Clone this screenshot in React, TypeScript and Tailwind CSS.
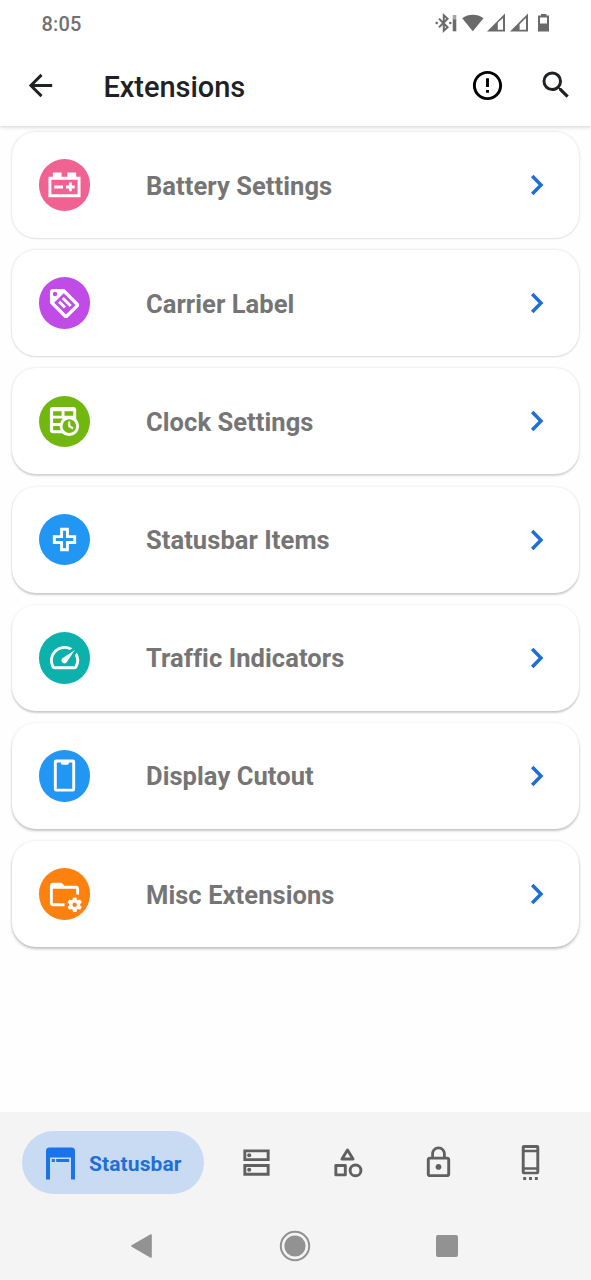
import React from "react";
import { MdArrowBack, MdSearch, MdErrorOutline, MdSpeed, MdLockOutline } from "react-icons/md";

const glyph = "h-[35px] w-[35px] shrink-0";

const Svg = ({ children, className = glyph }: { children: React.ReactNode; className?: string }) => (
  <svg viewBox="0 0 24 24" className={className} fill="currentColor" fillRule="evenodd">
    {children}
  </svg>
);

const CarBattery = () => (
  <Svg>
    <path d="M4,3V6H1V20H23V6H20V3H14V6H10V3H4M3,8H21V18H3V8M15,10V12H13V14H15V16H17V14H19V12H17V10H15M5,12V14H11V12H5Z" />
  </Svg>
);

const TagText = () => (
  <Svg>
    <path d="M21.41,11.58L12.41,2.58C12.05,2.22 11.55,2 11,2H4C2.89,2 2,2.89 2,4V11C2,11.55 2.22,12.05 2.59,12.41L11.58,21.41C11.95,21.78 12.45,22 13,22C13.55,22 14.05,21.77 14.41,21.41L21.41,14.41C21.77,14.05 22,13.55 22,13C22,12.45 21.77,11.94 21.41,11.58M5.5,4A1.5,1.5 0 0,1 7,5.5A1.5,1.5 0 0,1 5.5,7A1.5,1.5 0 0,1 4,5.5A1.5,1.5 0 0,1 5.5,4M11.5,4.9L19.6,13L13,19.6L4.9,11.5Z" />
    <path d="M10.1,8.9L11.5,7.5L17,13L15.6,14.4ZM7.6,11.4L9,10L13,14L11.6,15.4Z" />
  </Svg>
);

const TableClock = () => (
  <Svg>
    <path d="M4,2H18A2,2 0 0 1 20,4V10.3A6.5,6.5 0 1 1 10.3,20H4A2,2 0 0 1 2,18V4A2,2 0 0 1 4,2M4.2,5V8H10V5H4.2M12,5V8H18V5H12M4.2,10V13H9.2A6.5,6.5 0 0 1 10.8,10H4.2M4.2,15V18H9.3A6.5,6.5 0 0 1 8.7,15H4.2M15.3,10.5A4.7,4.7 0 1 0 15.3,19.9A4.7,4.7 0 1 0 15.3,10.5M14.5,12H16V14.8L18.2,16.1L17.5,17.4L14.5,15.6V12" />
  </Svg>
);

const PlusOutline = () => (
  <Svg>
    <path d="M4,9H9V4H15V9H20V15H15V20H9V15H4V9M11,13V18H13V13H18V11H13V6H11V11H6V13H11Z" />
  </Svg>
);

const Cutout = () => (
  <Svg>
    <path d="M6.3,1H17.7A1.6,1.6 0 0 1 19.3,2.6V21.4A1.6,1.6 0 0 1 17.7,23H6.3A1.6,1.6 0 0 1 4.7,21.4V2.6A1.6,1.6 0 0 1 6.3,1M6.7,3V21H17.3V3H15V3.6A1,1 0 0 1 14,4.6H10.6A1,1 0 0 1 9.6,3.6V3H6.7" />
  </Svg>
);

const FolderCog = () => (
  <Svg>
    <path d="M4 4C2.89 4 2 4.89 2 6V18C2 19.11 2.9 20 4 20H12V18H4V8H20V12H22V8C22 6.89 21.1 6 20 6H12L10 4M18 14C17.87 14 17.76 14.09 17.74 14.21L17.55 15.53C17.25 15.66 16.96 15.82 16.7 16L15.46 15.5C15.35 15.5 15.22 15.5 15.15 15.63L14.15 17.36C14.09 17.47 14.11 17.6 14.21 17.68L15.27 18.5C15.25 18.67 15.24 18.83 15.24 19C15.24 19.17 15.25 19.33 15.27 19.5L14.21 20.32C14.12 20.4 14.09 20.53 14.15 20.64L15.15 22.37C15.21 22.5 15.34 22.5 15.46 22.5L16.7 22C16.96 22.18 17.24 22.35 17.55 22.47L17.74 23.79C17.76 23.91 17.86 24 18 24H20C20.11 24 20.22 23.91 20.24 23.79L20.43 22.47C20.73 22.34 21 22.18 21.27 22L22.5 22.5C22.63 22.5 22.76 22.5 22.83 22.37L23.83 20.64C23.89 20.53 23.86 20.4 23.77 20.32L22.7 19.5C22.72 19.33 22.74 19.17 22.74 19C22.74 18.83 22.73 18.67 22.7 18.5L23.76 17.68C23.85 17.6 23.88 17.47 23.82 17.36L22.82 15.63C22.76 15.5 22.63 15.5 22.5 15.5L21.27 16C21 15.82 20.73 15.65 20.42 15.53L20.23 14.21C20.22 14.09 20.11 14 20 14M19 17.5C19.83 17.5 20.5 18.17 20.5 19C20.5 19.83 19.83 20.5 19 20.5C18.16 20.5 17.5 19.83 17.5 19C17.5 18.17 18.17 17.5 19 17.5Z" />
  </Svg>
);

const rows = [
  { label: "Battery Settings", color: "bg-[#f06292]", icon: <CarBattery />, shadow: "shadow-[0_0_2px_1px_rgba(0,0,0,0.08),0_1px_1px_rgba(0,0,0,0.05)]" },
  { label: "Carrier Label", color: "bg-[#c04be6]", icon: <TagText />, shadow: "shadow-[0_0_2px_1px_rgba(0,0,0,0.07),0_1px_2px_rgba(0,0,0,0.09)]" },
  { label: "Clock Settings", color: "bg-[#72b70f]", icon: <TableClock />, shadow: "shadow-[0_0_3px_rgba(0,0,0,0.10),0_1.5px_2px_rgba(0,0,0,0.15)]" },
  { label: "Statusbar Items", color: "bg-[#2196f3]", icon: <PlusOutline />, shadow: "shadow-[0_0_3px_rgba(0,0,0,0.09),0_1.5px_2px_rgba(0,0,0,0.18)]" },
  { label: "Traffic Indicators", color: "bg-[#0cb1ac]", icon: <MdSpeed className={glyph} />, shadow: "shadow-[0_0_3px_rgba(0,0,0,0.08),0_2px_2px_rgba(0,0,0,0.19)]" },
  { label: "Display Cutout", color: "bg-[#2196f3]", icon: <Cutout />, shadow: "shadow-[0_0_3px_rgba(0,0,0,0.08),0_2px_2.5px_rgba(0,0,0,0.21)]" },
  { label: "Misc Extensions", color: "bg-[#fc810f]", icon: <FolderCog />, shadow: "shadow-[0_0_3px_rgba(0,0,0,0.09),0_2px_3px_rgba(0,0,0,0.23)]" },
];

const StatusIcons = () => (
  <svg viewBox="0 0 118 24" className="h-6 w-[118px] shrink-0" fill="#6a6a6a">
    <path d="M4 6.6L12.6 15.2L8.8 18.8V3.2L12.6 6.8L4 15.4" fill="none" stroke="#6a6a6a" strokeWidth="2" />
    <circle cx="1.7" cy="11" r="1.3" />
    <circle cx="15.3" cy="11" r="1.3" />
    <rect x="17.7" y="3" width="3.6" height="4.5" fill="#a5a5a5" />
    <rect x="17.7" y="7.3" width="3.6" height="12" />
    <path d="M27.2 6.2C33.2 1.6 42.5 1.6 48.5 6.2L37.8 19.3Z" />
    <path d="M52 19.5L70 1.5V19.5Z M62.8 10.8V17.8H68V6Z" fillRule="evenodd" />
    <path d="M75 19.5L93 1.5V19.5Z M84.6 12.3V17.8H91V6Z" fillRule="evenodd" />
    <path d="M106 2H111.5V3.5H114V19.5H103V3.5H106ZM105 5.6V11.5H112V5.6Z" fillRule="evenodd" />
  </svg>
);

const Chevron = () => (
  <svg viewBox="0 0 15 22" className="h-[22px] w-[15px] shrink-0" fill="none" stroke="#1f6fd6" strokeWidth="3.5">
    <path d="M2.2 2L11 11L2.2 20" />
  </svg>
);

const NavCell = ({ children }: { children: React.ReactNode }) => (
  <button className="flex h-16 w-[91.3px] shrink-0 items-center justify-center text-[#606060]">{children}</button>
);

export default function App() {
  return (
    <div className="flex h-[1280px] w-[591px] flex-col overflow-hidden bg-[#fefefe] font-['Roboto',sans-serif]">
      <header className="h-[126px] shrink-0 bg-white shadow-[0_1px_4px_rgba(0,0,0,0.18)]">
        <div className="flex h-[47px] items-center justify-between pl-[41.5px] pr-[38px]">
          <span className="mt-px text-[20px] font-medium leading-6 tracking-[0.2px] text-[#717171]">8:05</span>
          <StatusIcons />
        </div>
        <div className="flex h-[77px] items-center">
          <MdArrowBack className="ml-[23px] h-[35px] w-[35px] shrink-0 text-[#202124]" />
          <h1 className="ml-[45.5px] mt-[3px] flex-1 text-[29px] font-medium leading-9 tracking-[-0.05px] text-[#202124]">Extensions</h1>
          <MdErrorOutline className="mb-px mr-[33px] h-[35px] w-[35px] shrink-0 text-black" />
          <MdSearch className="mb-px mr-[17.5px] h-[36px] w-[36px] shrink-0 text-[#202124]" />
        </div>
      </header>

      <main className="flex flex-1 flex-col gap-[12.2px] px-3 pt-[6px]">
        {rows.map((r) => (
          <div key={r.label} className={`flex h-[106px] shrink-0 items-center rounded-[24px] bg-white pl-[26.7px] pr-[34px] ${r.shadow}`}>
            <span className={`flex h-[51.5px] w-[51.5px] shrink-0 items-center justify-center rounded-full text-white ${r.color}`}>
              {r.icon}
            </span>
            <span className="ml-[55.8px] mt-px flex-1 text-[25.5px] font-bold leading-8 tracking-[0.07px] text-[#757575]">{r.label}</span>
            <Chevron />
          </div>
        ))}
      </main>

      <footer className="flex h-[168px] shrink-0 flex-col bg-[#f4f4f4] pt-[18px]">
        <nav className="flex items-center pl-[22px]">
          <button className="mr-[7px] flex h-[63px] w-[181.5px] shrink-0 items-center rounded-full bg-[#c9dbf3] pl-6 text-[#1a73e8]">
            <svg viewBox="0 0 29 33" className="mt-[3px] h-[33px] w-[29px] shrink-0" fill="currentColor">
              <path d="M0 32.5V4A3.5 3.5 0 0 1 3.5 0.5H25.5A3.5 3.5 0 0 1 29 4V32.5H25V10.5H4V32.5Z" />
              <rect x="5.8" y="12" width="3" height="3" />
              <rect x="10.2" y="12" width="13" height="3" />
            </svg>
            <span className="ml-[14px] mt-[3px] text-[21px] font-bold leading-6 tracking-[0.1px] text-[#1f6fd6]">Statusbar</span>
          </button>
          <NavCell>
            <Svg>
              <path d="M3,3H21V11H3ZM5,5V9H19V5ZM3,13H21V21H3ZM5,15V19H19V15Z" />
              <circle cx="7" cy="7" r="1.4" />
              <circle cx="7" cy="17" r="1.4" />
            </Svg>
          </NavCell>
          <NavCell>
            <svg viewBox="0 0 24 24" className={`${glyph} mt-px`} fill="none" stroke="currentColor" strokeWidth="2" strokeLinejoin="round">
              <path d="M12 3.4L8.2 9.6H15.8Z" />
              <rect x="4" y="14" width="6.5" height="6.5" />
              <circle cx="17.5" cy="17.4" r="3.7" />
            </svg>
          </NavCell>
          <NavCell>
            <MdLockOutline className={glyph} />
          </NavCell>
          <NavCell>
            <Svg>
              <path d="M7.5,0H16.5A1.5,1.5 0 0 1 18,1.5V18.5A1.5,1.5 0 0 1 16.5,20H7.5A1.5,1.5 0 0 1 6,18.5V1.5A1.5,1.5 0 0 1 7.5,0M8,2V3.3H16V2H8M8,5V15.2H16V5H8M8,17V18.3H16V17H8M7,22H9V24H7V22M11,22H13V24H11V22M15,22H17V24H15V22" />
            </Svg>
          </NavCell>
        </nav>
        <div className="flex h-[102px] shrink-0 items-center pl-[131px] pt-[1px] text-[#929292]">
          <svg viewBox="0 0 22 24" className="h-6 w-[22px] shrink-0" fill="currentColor">
            <path d="M1 12L20 1V23Z" stroke="currentColor" strokeWidth="1.6" strokeLinejoin="round" />
          </svg>
          <svg viewBox="0 0 32 32" className="ml-[126.3px] h-8 w-8 shrink-0" fill="currentColor">
            <circle cx="16" cy="16" r="14.2" fill="none" stroke="currentColor" strokeWidth="2" />
            <circle cx="16" cy="16" r="10.6" />
          </svg>
          <span className="ml-[125.2px] h-[22px] w-[22px] shrink-0 rounded-[2px] bg-[#929292]" />
        </div>
      </footer>
    </div>
  );
}
